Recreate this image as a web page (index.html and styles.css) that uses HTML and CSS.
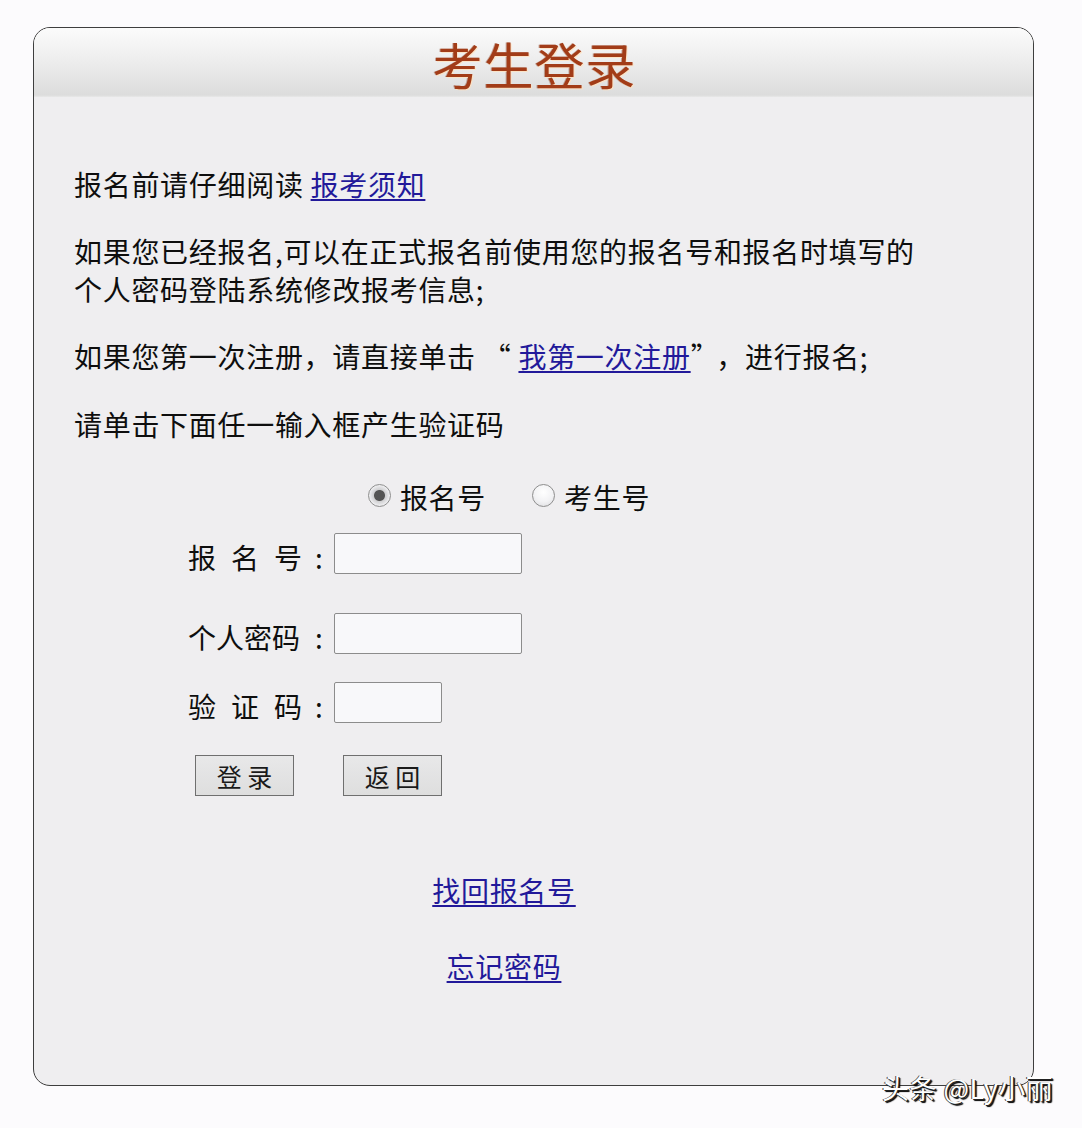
FILE: index.html
```html
<!DOCTYPE html>
<html lang="zh-CN">
<head>
<meta charset="utf-8">
<title>考生登录</title>
<link rel="stylesheet" href="styles.css">
</head>
<body>
<div class="panel">
  <div class="panel-head"><h1 class="title">考生登录</h1></div>
  <div class="panel-body">
    <p class="para">报名前请仔细阅读 <a href="#" class="link">报考须知</a></p>
    <p class="para">如果您已经报名,可以在正式报名前使用您的报名号和报名时填写的<br>个人密码登陆系统修改报考信息;</p>
    <p class="para">如果您第一次注册，请直接单击 “ <a href="#" class="link">我第一次注册</a>”<span class="comma">，</span>进行报名;</p>
    <p class="para">请单击下面任一输入框产生验证码</p>

    <div class="radio-row">
      <label class="radio-item"><input type="radio" name="kind" class="radio" checked><span>报名号</span></label>
      <label class="radio-item"><input type="radio" name="kind" class="radio"><span>考生号</span></label>
    </div>

    <div class="form">
      <div class="form-row row-1">
        <span class="label"><span class="label-chars"><span>报</span><span>名</span><span>号</span></span><span class="colon">:</span></span>
        <input type="text" class="field">
      </div>
      <div class="form-row row-2">
        <span class="label"><span class="label-chars"><span>个人密码</span></span><span class="colon">:</span></span>
        <input type="password" class="field">
      </div>
      <div class="form-row row-3">
        <span class="label"><span class="label-chars"><span>验</span><span>证</span><span>码</span></span><span class="colon">:</span></span>
        <input type="text" class="field field-short">
      </div>
      <div class="button-row">
        <button class="btn">登 录</button>
        <button class="btn">返 回</button>
      </div>
    </div>

    <div class="links">
      <a href="#" class="link link-1">找回报名号</a>
      <a href="#" class="link link-2">忘记密码</a>
    </div>
  </div>
</div>
<div class="watermark">头条 @Ly小丽</div>
</body>
</html>
```
FILE: styles.css
```css
html, body {
  margin: 0;
  padding: 0;
}
body {
  background: #fcfbfd;
  font-family: "Noto Sans CJK SC", "Noto Sans", sans-serif;
  color: #0e0e0e;
  width: 1082px;
  height: 1128px;
  position: relative;
  overflow: hidden;
}
.panel {
  margin: 27px 0 0 33px;
  width: 999px;
  height: 1057px;
  border: 1.5px solid #3e3e3e;
  border-radius: 17px;
  background: #efeef0;
  overflow: hidden;
  box-sizing: content-box;
}
.panel-head {
  height: 69px;
  display: flex;
  align-items: center;
  justify-content: center;
  background: linear-gradient(#fbfbfb 0%, #f1f1f1 35%, #e4e4e4 75%, #dcdcdc 97%, #e8e8e8 100%);
}
.title {
  margin: 0 0 0 2px;
  font-size: 50px;
  font-weight: 400;
  line-height: 1;
  letter-spacing: 1px;
  color: #a23c18;
  text-shadow: 1px 1px 0 rgba(255, 225, 190, 0.8), -1px 0 0 rgba(120, 40, 10, 0.35);
}
.panel-body {
  padding: 68px 99px 0 40px;
  font-size: 28px;
  line-height: 38px;
  letter-spacing: 0.7px;
}
.para {
  margin: 0 0 29px;
}
.para:nth-of-type(3) {
  margin-bottom: 30px;
}
.para:nth-of-type(4) {
  margin-bottom: 0;
}
.comma {
  margin-left: 11px;
}
.link {
  color: #22199a;
  text-decoration: underline;
  text-underline-offset: 3px;
  text-decoration-thickness: 2px;
}
.radio-row {
  margin-top: 35px;
  display: flex;
  justify-content: center;
  gap: 46px;
  height: 38px;
  padding-left: 10px;
}
.radio-item {
  display: flex;
  align-items: center;
  gap: 9px;
}
.radio {
  appearance: none;
  -webkit-appearance: none;
  margin: 0;
  width: 23px;
  height: 23px;
  border-radius: 50%;
  border: 1px solid #8e8e8e;
  background: radial-gradient(circle at 50% 35%, #ffffff 0%, #f2f2f4 55%, #d9d9dc 100%);
  position: relative;
  top: -2px;
}
.radio:checked {
  background: radial-gradient(circle, #555 0, #555 5px, #d0d0d2 6px, #f4f4f6 11px);
}
.form {
  padding-left: 114px;
}
.form-row {
  display: flex;
  align-items: flex-start;
  height: 40px;
}
.row-1 { margin-top: 17px; }
.row-2 { margin-top: 40px; }
.row-3 { margin-top: 29px; }
.label {
  width: 146px;
  display: flex;
  align-items: center;
  height: 40px;
  padding-top: 8px;
  box-sizing: border-box;
  letter-spacing: 0;
}
.label-chars {
  width: 114px;
  display: flex;
  justify-content: space-between;
}
.colon {
  margin-left: 13px;
}
.field {
  width: 188px;
  height: 41px;
  box-sizing: border-box;
  border: 1px solid #8c8c8c;
  border-radius: 2px;
  background: #f8f8fa;
  margin: 0;
  font-size: 20px;
}
.field-short {
  width: 108px;
}
.button-row {
  margin-top: 33px;
  padding-left: 7px;
  display: flex;
  gap: 49px;
}
.btn {
  width: 99px;
  height: 41px;
  margin: 0;
  border: 1px solid #6f6f6f;
  border-radius: 0;
  background: linear-gradient(#e8e8e9, #dedede);
  font-family: "Noto Sans CJK SC", sans-serif;
  font-size: 25px;
  color: #1a1a1a;
  line-height: 1;
  padding: 2px 0 0;
}
.links {
  display: flex;
  flex-direction: column;
  align-items: center;
}
.link-1 {
  margin-top: 75px;
}
.link-2 {
  margin-top: 38px;
}
.watermark {
  position: absolute;
  left: 882px;
  top: 1071px;
  font-size: 27px;
  line-height: 34px;
  color: #ffffff;
  text-shadow: 1px 1px 0 #222, -1px 0 0 #444, 2px 2px 1px #000;
  letter-spacing: 0.5px;
}
```
